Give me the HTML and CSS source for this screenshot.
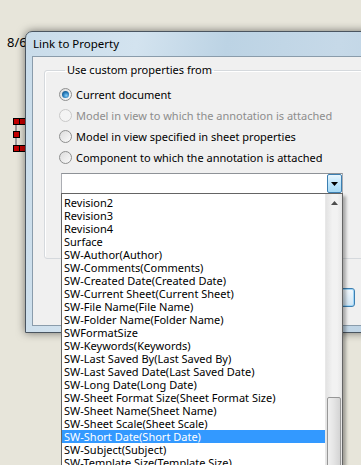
FILE: index.html
```html
<!DOCTYPE html>
<html lang="en">
<head>
    <meta charset="UTF-8">
    <title>Link to Property</title>
    <link rel="stylesheet" href="styles.css">
</head>
<body>

    <div class="sheet-text">8/6</div>

    <svg class="handles" width="14" height="36" viewBox="0 0 14 36">
        <rect x="0.5" y="0.5" width="6" height="6" fill="#c40000" stroke="#000"/>
        <rect x="6.5" y="0.5" width="6" height="6" fill="#c40000" stroke="#000"/>
        <rect x="2" y="7" width="2" height="6" fill="#9a9a9a"/>
        <rect x="0.5" y="13.5" width="6" height="6" fill="#c40000" stroke="#000"/>
        <rect x="2" y="20" width="2" height="7" fill="#9a9a9a"/>
        <rect x="0.5" y="27.5" width="6" height="6" fill="#c40000" stroke="#000"/>
        <rect x="6.5" y="27.5" width="6" height="6" fill="#c40000" stroke="#000"/>
    </svg>

    <div class="dialog">
        <div class="titlebar">Link to Property</div>
        <div class="client">
            <fieldset class="group">
                <legend>Use custom properties from</legend>
                <label class="opt"><span class="radio checked"></span>Current document</label>
                <label class="opt disabled"><span class="radio"></span>Model in view to which the annotation is attached</label>
                <label class="opt"><span class="radio"></span>Model in view specified in sheet properties</label>
                <label class="opt"><span class="radio"></span>Component to which the annotation is attached</label>
                <div class="combo">
                    <span class="combo-btn">
                        <svg width="7" height="4" viewBox="0 0 7 4"><path d="M0 0h7L3.5 4z" fill="#000"/></svg>
                    </span>
                </div>
            </fieldset>
            <div class="btn"></div>
        </div>
    </div>

    <div class="droplist">
        <ul class="items">
            <li>Revision2</li>
            <li>Revision3</li>
            <li>Revision4</li>
            <li>Surface</li>
            <li>SW-Author(Author)</li>
            <li>SW-Comments(Comments)</li>
            <li>SW-Created Date(Created Date)</li>
            <li>SW-Current Sheet(Current Sheet)</li>
            <li>SW-File Name(File Name)</li>
            <li>SW-Folder Name(Folder Name)</li>
            <li>SWFormatSize</li>
            <li>SW-Keywords(Keywords)</li>
            <li>SW-Last Saved By(Last Saved By)</li>
            <li>SW-Last Saved Date(Last Saved Date)</li>
            <li>SW-Long Date(Long Date)</li>
            <li>SW-Sheet Format Size(Sheet Format Size)</li>
            <li>SW-Sheet Name(Sheet Name)</li>
            <li>SW-Sheet Scale(Sheet Scale)</li>
            <li class="selected">SW-Short Date(Short Date)</li>
            <li>SW-Subject(Subject)</li>
            <li>SW-Template Size(Template Size)</li>
        </ul>
        <div class="scrollbar">
            <div class="arrow-up">
                <svg width="7" height="4" viewBox="0 0 7 4"><path d="M0 4h7L3.5 0z" fill="#4d4d4d"/></svg>
            </div>
            <div class="track"></div>
            <div class="thumb"></div>
        </div>
    </div>

</body>
</html>
```

FILE: styles.css
```css
body {
    margin: 0;
    width: 361px;
    height: 465px;
    overflow: hidden;
    position: relative;
    background: #e7e5da;
    font-family: "Noto Sans", sans-serif;
    font-size: 11px;
    color: #000;
}

.sheet-text {
    position: absolute;
    left: 7px;
    top: 33px;
    font-size: 13px;
    line-height: 18px;
}

.handles {
    position: absolute;
    left: 13px;
    top: 118px;
}

/* dialog window */
.dialog {
    position: absolute;
    left: 25px;
    top: 31px;
    width: 400px;
    height: 302px;
    box-sizing: border-box;
    border: 1px solid #4a5560;
    border-radius: 7px 7px 0 0;
    padding: 0 6px 6px 6px;
    background: linear-gradient(100deg, #c9dcea 0%, #d3e3ef 25%, #bcd3e4 45%, #c6d9e8 70%, #b9d0e2 100%);
    box-shadow: 0 0 9px rgba(0, 0, 0, 0.5);
}

.titlebar {
    height: 24px;
    line-height: 24px;
    padding-left: 1px;
    font-size: 11.5px;
}

.client {
    height: 270px;
    box-sizing: border-box;
    border: 1px solid #8a9cab;
    background: #f0f0f0;
    display: flex;
    flex-direction: column;
}

.group {
    margin: 6px 0 0 11px;
    padding: 7px 0 0 14px;
    width: 330px;
    height: 196px;
    box-sizing: border-box;
    border: 1px solid #d5d9dd;
    border-radius: 3px;
    box-shadow: inset 1px 1px 0 #fff;
    display: flex;
    flex-direction: column;
}

.group legend {
    margin-left: 6px;
    padding: 0 2px;
    line-height: 14px;
}

.opt {
    display: flex;
    align-items: center;
    gap: 4px;
    height: 21px;
}

.opt.disabled {
    color: #8d8d8d;
}

.radio {
    width: 13px;
    height: 13px;
    box-sizing: border-box;
    border: 1px solid #8e8f8f;
    border-radius: 50%;
    background: linear-gradient(135deg, #dcdcdc, #fafafa);
    display: flex;
    align-items: center;
    justify-content: center;
}

.radio.checked::after {
    content: "";
    width: 7px;
    height: 7px;
    border-radius: 50%;
    background: radial-gradient(circle at 60% 65%, #8fd0f5 0%, #2a7fbf 45%, #0d3f66 100%);
}

.opt.disabled .radio {
    border-color: #c9c9c9;
    background: #f4f4f4;
}

.combo {
    margin: 5px 0 0 2px;
    width: 282px;
    height: 21px;
    box-sizing: border-box;
    border: 1px solid #abadb3;
    border-top-color: #8e9297;
    background: #fff;
    display: flex;
    justify-content: flex-end;
}

.combo-btn {
    width: 15px;
    box-sizing: border-box;
    border: 1px solid #3c7fb1;
    border-radius: 2px;
    background: linear-gradient(#eaf6fd, #bee6fd 50%, #a7d9f5);
    display: flex;
    align-items: center;
    justify-content: center;
}

.btn {
    margin: 29px 0 0 247px;
    width: 75px;
    height: 19px;
    box-sizing: border-box;
    border: 1px solid #3c7fb1;
    border-radius: 3px;
    background: linear-gradient(#f2f8fc, #e0eef8 50%, #cfe4f3);
    box-shadow: inset 0 0 0 1px #9fd5f7;
}

/* drop-down list popup */
.droplist {
    position: absolute;
    left: 61px;
    top: 193px;
    width: 282px;
    height: 290px;
    box-sizing: border-box;
    border: 1px solid #646464;
    background: #fff;
    box-shadow: 3px 3px 3px rgba(0, 0, 0, 0.3);
    display: flex;
}

.items {
    list-style: none;
    margin: 0;
    padding: 2px 0 0 0;
    flex: 1;
}

.items li {
    height: 13px;
    line-height: 13px;
    padding-left: 2px;
    white-space: nowrap;
}

.items li.selected {
    background: #3399ff;
    color: #fff;
}

.scrollbar {
    width: 16px;
    background: linear-gradient(90deg, #e3e3e3, #f2f2f2 40%, #f2f2f2 70%, #e6e6e6);
    border-left: 1px solid #e8e8e8;
    display: flex;
    flex-direction: column;
}

.arrow-up {
    height: 17px;
    display: flex;
    align-items: center;
    justify-content: center;
}

.track {
    height: 186px;
}

.thumb {
    flex: 1;
    margin: 0 1px;
    border: 1px solid #979797;
    border-radius: 2px;
    background: linear-gradient(90deg, #f0f0f0, #e4e4e4 50%, #d4d4d4);
}
```
